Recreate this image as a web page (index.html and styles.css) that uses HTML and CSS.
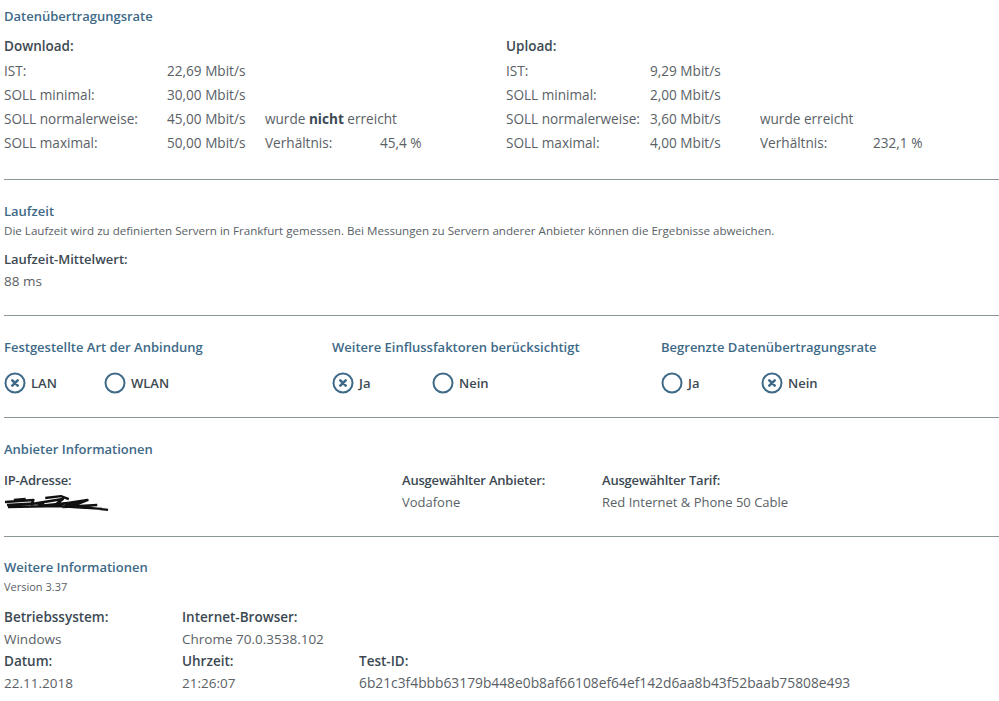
FILE: index.html
```html
<!DOCTYPE html>
<html lang="de">
<head>
<meta charset="utf-8">
<title>Messprotokoll</title>
<link rel="stylesheet" href="styles.css">
</head>
<body>
<div class="page">

  <section class="section s-rate">
    <h2 class="title">Datenübertragungsrate</h2>
    <div class="rate-cols">
      <div class="rate rate-down">
        <div class="label-b head">Download:</div>
        <div class="row"><span>IST:</span><span>22,69 Mbit/s</span></div>
        <div class="row"><span>SOLL minimal:</span><span>30,00 Mbit/s</span></div>
        <div class="row"><span>SOLL normalerweise:</span><span>45,00 Mbit/s</span><span class="span2">wurde <b>nicht</b> erreicht</span></div>
        <div class="row"><span>SOLL maximal:</span><span>50,00 Mbit/s</span><span>Verhältnis:</span><span>45,4 %</span></div>
      </div>
      <div class="rate rate-up">
        <div class="label-b head">Upload:</div>
        <div class="row"><span>IST:</span><span>9,29 Mbit/s</span></div>
        <div class="row"><span>SOLL minimal:</span><span>2,00 Mbit/s</span></div>
        <div class="row"><span>SOLL normalerweise:</span><span>3,60 Mbit/s</span><span class="span2">wurde erreicht</span></div>
        <div class="row"><span>SOLL maximal:</span><span>4,00 Mbit/s</span><span>Verhältnis:</span><span>232,1 %</span></div>
      </div>
    </div>
  </section>

  <section class="section s-lat">
    <h2 class="title">Laufzeit</h2>
    <p class="desc">Die Laufzeit wird zu definierten Servern in Frankfurt gemessen. Bei Messungen zu Servern anderer Anbieter können die Ergebnisse abweichen.</p>
    <div class="label-b lat-label">Laufzeit-Mittelwert:</div>
    <div class="value">88 ms</div>
  </section>

  <section class="section s-conn">
    <div class="conn-col">
      <h2 class="title">Festgestellte Art der Anbindung</h2>
      <div class="opts">
        <div class="opt"><svg class="radio" viewBox="0 0 22 22"><circle cx="11" cy="11" r="9.5"/><path class="x" d="M8.3 8.3L13.7 13.7M13.7 8.3L8.3 13.7"/></svg><span>LAN</span></div>
        <div class="opt"><svg class="radio" viewBox="0 0 22 22"><circle cx="11" cy="11" r="9.5"/></svg><span>WLAN</span></div>
      </div>
    </div>
    <div class="conn-col">
      <h2 class="title">Weitere Einflussfaktoren berücksichtigt</h2>
      <div class="opts">
        <div class="opt"><svg class="radio" viewBox="0 0 22 22"><circle cx="11" cy="11" r="9.5"/><path class="x" d="M8.3 8.3L13.7 13.7M13.7 8.3L8.3 13.7"/></svg><span>Ja</span></div>
        <div class="opt"><svg class="radio" viewBox="0 0 22 22"><circle cx="11" cy="11" r="9.5"/></svg><span>Nein</span></div>
      </div>
    </div>
    <div class="conn-col">
      <h2 class="title">Begrenzte Datenübertragungsrate</h2>
      <div class="opts">
        <div class="opt"><svg class="radio" viewBox="0 0 22 22"><circle cx="11" cy="11" r="9.5"/></svg><span>Ja</span></div>
        <div class="opt"><svg class="radio" viewBox="0 0 22 22"><circle cx="11" cy="11" r="9.5"/><path class="x" d="M8.3 8.3L13.7 13.7M13.7 8.3L8.3 13.7"/></svg><span>Nein</span></div>
      </div>
    </div>
  </section>

  <section class="section s-prov">
    <h2 class="title">Anbieter Informationen</h2>
    <div class="prov-grid">
      <div class="label-b">IP-Adresse:</div>
      <div class="label-b">Ausgewählter Anbieter:</div>
      <div class="label-b">Ausgewählter Tarif:</div>
      <div class="value redact">
        <svg viewBox="0 0 110 20" class="scribble"><path d="M1 9 L30 7 L28 11 L60 6 L52 12 L85 7 L70 13 L106 17 M3 12 L40 10 L35 13 L75 9 L60 14 L95 12 M10 7 L22 6 M42 5 L58 3 L66 6 M4 14 L55 13 L100 16" /></svg>
      </div>
      <div class="value">Vodafone</div>
      <div class="value">Red Internet &amp; Phone 50 Cable</div>
    </div>
  </section>

  <section class="section s-more">
    <h2 class="title">Weitere Informationen</h2>
    <p class="desc">Version 3.37</p>
    <div class="more-grid">
      <div class="label-b">Betriebssystem:</div>
      <div class="label-b">Internet-Browser:</div>
      <div></div>
      <div class="value">Windows</div>
      <div class="value">Chrome 70.0.3538.102</div>
      <div></div>
      <div class="label-b">Datum:</div>
      <div class="label-b">Uhrzeit:</div>
      <div class="label-b">Test-ID:</div>
      <div class="value">22.11.2018</div>
      <div class="value">21:26:07</div>
      <div class="value id">6b21c3f4bbb63179b448e0b8af66108ef64ef142d6aa8b43f52baab75808e493</div>
    </div>
  </section>

</div>
</body>
</html>
```
FILE: styles.css
```css
html, body {
  margin: 0;
  padding: 0;
  background: #ffffff;
}
body {
  font-family: "Open Sans", "Noto Sans", sans-serif;
  color: #5a6166;
  font-size: 14px;
}
.page {
  width: 995px;
  padding-left: 4px;
}
.section {
  border-bottom: 1px solid #8b9497;
}
.title {
  margin: 0;
  font-size: 13px;
  line-height: 20px;
  font-weight: 600;
  color: #3e6a88;
}
.label-b {
  font-size: 13.5px;
  font-weight: 600;
  color: #3c4952;
  line-height: 22px;
}
.value {
  line-height: 22px;
}
.desc {
  margin: 0;
  font-size: 11.5px;
  line-height: 18px;
}

/* Section 1 */
.s-rate {
  padding: 6px 0 24px;
}
.rate-cols {
  display: grid;
  grid-template-columns: 502px auto;
  margin-top: 8px;
}
.rate .head {
  line-height: 24px;
  margin-bottom: 1px;
}
.rate .row {
  display: grid;
  line-height: 24px;
  height: 24px;
  font-size: 13.6px;
}
.rate-down .row {
  grid-template-columns: 163px 98px 115px auto;
}
.rate-up .row {
  grid-template-columns: 144px 110px 113px auto;
}
.row .span2 {
  grid-column: span 2;
}
.row b {
  font-weight: 700;
  color: #3c4952;
}

/* Section 2 */
.s-lat {
  padding: 21px 0 23px;
}
.s-lat .desc {
  margin-top: 1px;
  font-size: 11.6px;
}
.lat-label {
  margin-top: 8px;
  font-size: 13px;
}
.s-lat .value {
  font-size: 13.5px;
}

/* Section 3 */
.s-conn {
  display: grid;
  grid-template-columns: 328px 329px auto;
  padding: 21px 0 22px;
}
.opts {
  display: flex;
  margin-top: 14px;
}
.opt {
  width: 100px;
  height: 24px;
  display: flex;
  align-items: center;
  gap: 5px;
  font-size: 13px;
  font-weight: 600;
  color: #3c4952;
}
.radio {
  width: 22px;
  height: 22px;
  flex: none;
}
.radio circle {
  fill: none;
  stroke: #3e6a88;
  stroke-width: 2;
}
.radio .x {
  fill: none;
  stroke: #3e6a88;
  stroke-width: 2.6;
  stroke-linecap: round;
}

/* Section 4 */
.s-prov {
  padding: 21px 0 23px;
}
.prov-grid {
  display: grid;
  grid-template-columns: 398px 200px auto;
  margin-top: 10px;
}
.prov-grid .label-b {
  font-size: 13px;
  letter-spacing: -0.2px;
}
.prov-grid .value {
  font-size: 13px;
}
.scribble {
  display: block;
  width: 108px;
  height: 20px;
  margin-top: 2px;
}
.scribble path {
  fill: none;
  stroke: #111;
  stroke-width: 2.5;
  stroke-linejoin: round;
}

/* Section 5 */
.s-more {
  padding: 20px 0 10px;
  border-bottom: none;
}
.s-more .desc {
  margin-top: 1px;
  font-size: 11px;
}
.more-grid {
  display: grid;
  grid-template-columns: 178px 177px auto;
  margin-top: 10px;
}
.more-grid .value {
  font-size: 13.5px;
}
.more-grid .value.id {
  font-size: 13.8px;
}
```
